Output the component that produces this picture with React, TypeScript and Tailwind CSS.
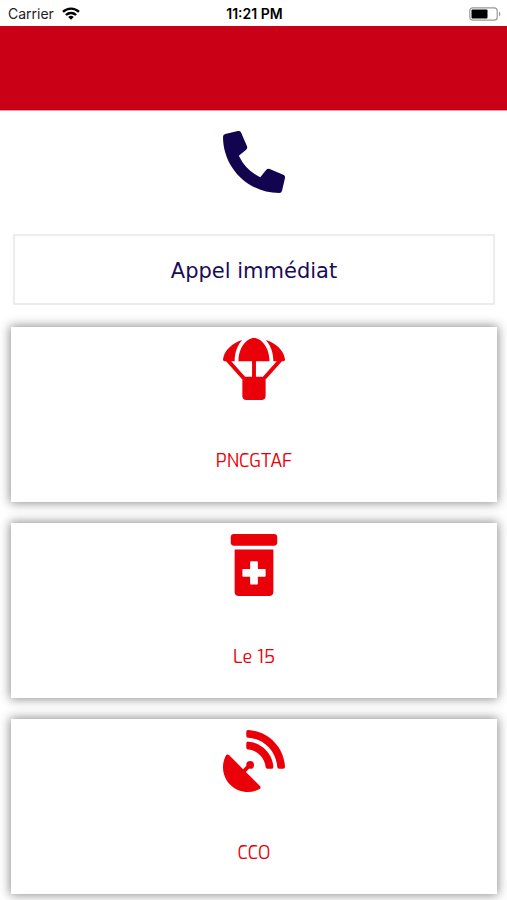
import type { IconType } from 'react-icons'
import {
  FaParachuteBox,
  FaPhoneAlt,
  FaPrescriptionBottleAlt,
  FaSatelliteDish,
} from 'react-icons/fa'

const contacts = [
  { label: 'PNCGTAF', icon: FaParachuteBox },
  { label: 'Le 15', icon: FaPrescriptionBottleAlt },
  { label: 'CCO', icon: FaSatelliteDish },
]

const StatusBar = () => (
  <div className="grid h-[26px] grid-cols-3 items-center bg-white pt-px pl-2 pr-1.5 font-['Inter',sans-serif] text-sm text-[#222]">
    <div className="flex items-center gap-2">
      <span>Carrier</span>
      <svg viewBox="0 0 18 13" className="h-[13px] w-[18px]" fill="none" stroke="#000" strokeWidth="2.4">
        <path d="M1 4.8a11.6 11.6 0 0 1 16 0" />
        <path d="M3.9 8a7.4 7.4 0 0 1 10.2 0" />
        <path d="M9 12.8 6.2 10a4 4 0 0 1 5.6 0z" fill="#000" stroke="none" />
      </svg>
    </div>
    <span className="text-center font-semibold whitespace-nowrap text-black">11:21 PM</span>
    <svg viewBox="0 0 32 14" className="h-3.5 w-8 justify-self-end" fill="none">
      <rect x="0.8" y="0.8" width="27.4" height="12.4" rx="3" stroke="#999" strokeWidth="1.2" />
      <rect x="2.5" y="2.5" width="16" height="9" rx="1" fill="#000" />
      <path d="M30 4.5c1.8.8 1.8 4.2 0 5z" fill="#999" />
    </svg>
  </div>
)

const ContactCard = ({ label, icon: Icon }: { label: string; icon: IconType }) => (
  <button
    type="button"
    className="flex h-[175px] w-full flex-col items-center bg-white pt-[11px] text-[#ea0008] shadow-[0_0_10px_1px_rgba(0,0,0,0.45)]"
  >
    <Icon className="size-[62px]" />
    <span className="mt-[49px] font-['Exo','Exo_2','Roboto',sans-serif] text-lg leading-6">
      {label}
    </span>
  </button>
)

const App = () => {
  return (
    <div className="min-h-screen bg-white">
      <StatusBar />
      <header className="h-[85px] border-b border-[#e39aa2] bg-[#c90016]" />
      <main className="pr-2.5 pb-1.5 pl-[11px]">
        <FaPhoneAlt className="mx-auto mt-5 size-[62px] text-[#130450]" />
        <div className="mt-[41px] px-0.5">
          <button
            type="button"
            className="h-[71px] w-full border-2 border-[#ececec] bg-white pt-1 font-['DejaVu_Sans',sans-serif] text-[21px] text-[#1b0c55]"
          >
            Appel immédiat
          </button>
        </div>
        <div className="mt-[22px] flex flex-col gap-[21px]">
          {contacts.map((contact) => (
            <ContactCard key={contact.label} {...contact} />
          ))}
        </div>
      </main>
    </div>
  )
}

export default App
